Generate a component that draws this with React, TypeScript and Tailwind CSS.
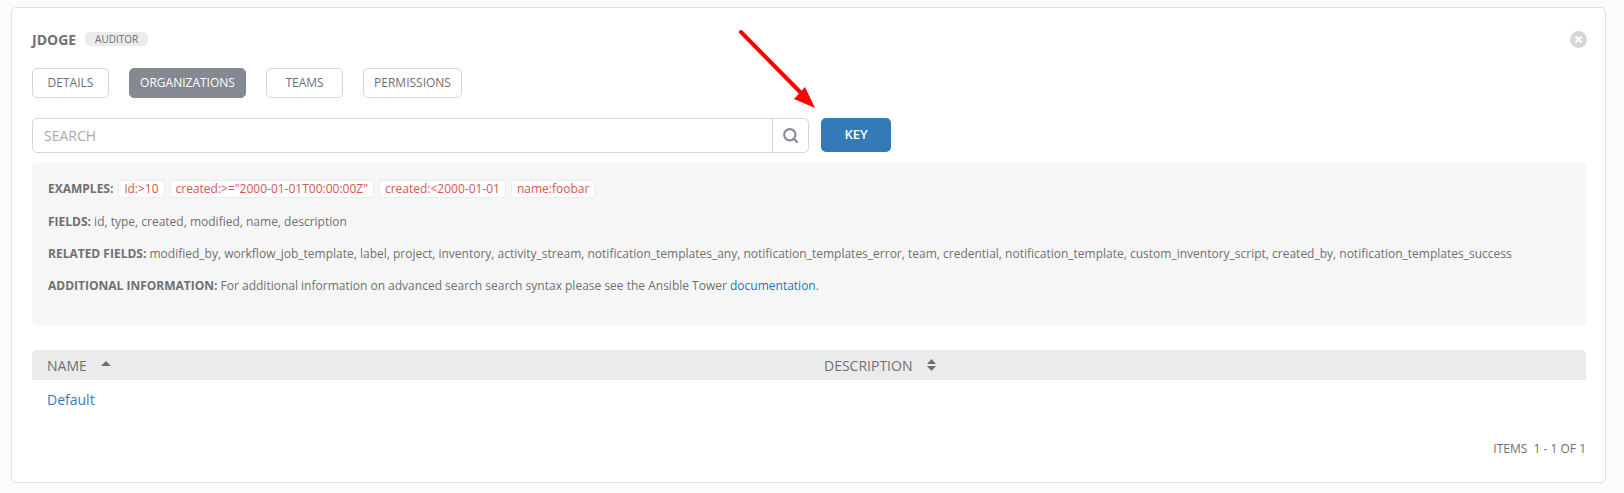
import React from 'react';
import { Search } from 'lucide-react';

const tabs = [
  { label: 'Details', width: 'w-[77px]' },
  { label: 'Organizations', width: 'w-[117px]' },
  { label: 'Teams', width: 'w-[77px]' },
  { label: 'Permissions', width: 'w-[99px]' },
];
const examples = ['id:>10', 'created:>="2000-01-01T00:00:00Z"', 'created:<2000-01-01', 'name:foobar'];

const App: React.FC = () => {
  return (
    <div className="h-[493px] bg-[#fbfbfb] pt-[7px] pl-[11px] pr-[18px] font-['Open_Sans',sans-serif] text-[#707070]">
      <div className="relative h-[476px] bg-white border border-[#e1e1e1] rounded-[5px] pt-[20px] pl-[20px] pr-[19px]">
        {/* Title */}
        <div className="flex items-center h-[22px]">
          <span className="text-[14px] font-bold text-[#707070]">JDOGE</span>
          <span className="ml-[9px] h-[14px] w-[63px] rounded-[5px] bg-[#ebebeb] text-[10px] leading-[14px] text-center text-[#707070]">AUDITOR</span>
          <div className="ml-auto mr-[-1px] w-[17px] h-[17px] rounded-full bg-[#d7d7d7] flex items-center justify-center">
            <svg width="9" height="9" viewBox="0 0 9 9">
              <path d="M1.5 1.5 L7.5 7.5 M7.5 1.5 L1.5 7.5" stroke="#fff" strokeWidth="2.4" />
            </svg>
          </div>
        </div>

        {/* Tabs */}
        <div className="flex gap-[20px] mt-[18px]">
          {tabs.map((tab) => (
            <button
              key={tab.label}
              className={`${tab.width} h-[30px] rounded-[5px] border text-[12px] uppercase ${
                tab.label === 'Organizations'
                  ? 'bg-[#848992] border-[#848992] text-white font-medium'
                  : 'bg-white border-[#d7d7d7] text-[#707070]'
              }`}
            >
              {tab.label}
            </button>
          ))}
        </div>

        {/* Search */}
        <div className="flex mt-[20px] gap-[12px]">
          <div className="flex w-[777px] h-[35px] border border-[#d7d7d7] rounded-[5px] bg-white">
            <div className="flex-1 pl-[11px] text-[14px] leading-[33px] text-[#a9a9a9]">SEARCH</div>
            <div className="w-[36px] border-l border-[#d7d7d7] flex items-center justify-center">
              <Search className="w-[17px] h-[17px] text-[#848992]" strokeWidth={3} />
            </div>
          </div>
          <button className="w-[70px] h-[34px] rounded-[5px] bg-[#337ab7] text-white text-[13px] font-semibold">KEY</button>
        </div>

        {/* Key panel */}
        <div className="mt-[10px] h-[162px] bg-[#f6f6f6] rounded-[5px] px-[16px] pt-[16px] text-[12px] text-[#707070]">
          <div className="flex items-center h-[20px]">
            <b className="mr-[5px]">EXAMPLES:</b>
            <div className="flex gap-[5px]">
              {examples.map((ex) => (
                <code key={ex} className="h-[18px] px-[5px] rounded-[4px] bg-white border border-[#ececec] font-['Open_Sans',sans-serif] text-[12px] leading-[16px] text-[#d9534f]">
                  {ex}
                </code>
              ))}
            </div>
          </div>
          <div className="mt-[13px] h-[20px] leading-[20px]"><b>FIELDS:</b> id, type, created, modified, name, description</div>
          <div className="mt-[12px] h-[20px] leading-[20px]">
            <b>RELATED FIELDS:</b> modified_by, workflow_job_template, label, project, inventory, activity_stream, notification_templates_any, notification_templates_error, team, credential, notification_template, custom_inventory_script, created_by, notification_templates_success
          </div>
          <div className="mt-[12px] h-[20px] leading-[20px]">
            <b>ADDITIONAL INFORMATION:</b> For additional information on advanced search search syntax please see the Ansible Tower <span className="text-[#1778c0]">documentation</span>.
          </div>
        </div>

        {/* Table */}
        <div className="mt-[25px] flex items-center h-[30px] bg-[#ebebeb] rounded-t-[5px] text-[14px] text-[#707070]">
          <div className="w-[792px] pl-[15px] flex items-center">
            NAME
            <svg className="ml-[14px] mb-[4px]" width="10" height="5" viewBox="0 0 10 5"><path d="M0 5 L5 0 L10 5 Z" fill="#707070" /></svg>
          </div>
          <div className="flex items-center">
            DESCRIPTION
            <svg className="ml-[15px]" width="9" height="12" viewBox="0 0 9 12"><path d="M0 5 L4.5 0 L9 5 Z M0 7 L4.5 12 L9 7 Z" fill="#707070" /></svg>
          </div>
        </div>
        <div className="h-[40px] pl-[15px] text-[14px] leading-[40px] text-[#337ab7]">Default</div>

        {/* Footer */}
        <div className="mt-[20px] text-right text-[12px] leading-[18px] text-[#707070] whitespace-pre">ITEMS  1 - 1 OF 1</div>

        {/* Annotation arrow */}
        <svg className="absolute left-[-12px] top-[-8px] pointer-events-none" width="900" height="130" viewBox="0 0 900 130">
          <path d="M741 32 L803 95" stroke="#fe0000" strokeWidth="4" strokeLinecap="round" fill="none" />
          <path d="M815 108 L794 99 L805 87 Z" fill="#fe0000" />
        </svg>
      </div>
    </div>
  );
};

export default App;
